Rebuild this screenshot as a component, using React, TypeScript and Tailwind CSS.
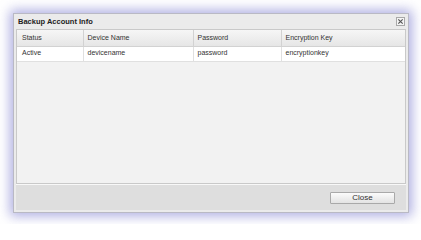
import React from 'react';

const rows = [{ status: 'Active', device: 'devicename', password: 'password', key: 'encryptionkey' }];

export default function App() {
  return (
    <div className="h-[224px] w-[421px] bg-white pl-[13px] pt-[13px] font-['Liberation_Sans',Arial,sans-serif]">
      <div className="flex h-[200px] w-[396px] flex-col border border-[#b9b9c4] bg-[#ebebeb] shadow-[0_0_11px_3px_rgba(120,120,205,0.6)]">
        {/* title bar */}
        <div className="flex h-[15px] items-center justify-between pl-[4px] pr-[3px]">
          <span className="text-[7.5px] font-bold text-[#222]">Backup Account Info</span>
          <span className="flex h-[9px] w-[9px] items-center justify-center border border-[#a8a8a8] bg-[#f4f4f4]">
            <svg viewBox="0 0 8 8" className="h-[7px] w-[7px]">
              <path d="M1.5 1.5L6.5 6.5M6.5 1.5L1.5 6.5" stroke="#555" strokeWidth="1.3" />
            </svg>
          </span>
        </div>

        {/* grid */}
        <div className="mx-[2px] flex-1 border border-[#c9c9c9] bg-[#f2f2f2]">
          <table className="w-full border-collapse text-[7px] text-[#333]">
            <thead>
              <tr className="h-[16px] bg-gradient-to-b from-[#f6f6f6] to-[#e6e6e6] text-left">
                <th className="w-[66px] border-r border-b border-[#d2d2d2] pl-[5px] font-normal">Status</th>
                <th className="w-[110px] border-r border-b border-[#d2d2d2] pl-[4px] font-normal">Device Name</th>
                <th className="w-[88px] border-r border-b border-[#d2d2d2] pl-[4px] font-normal">Password</th>
                <th className="border-b border-[#d2d2d2] pl-[4px] font-normal">Encryption Key</th>
              </tr>
            </thead>
            <tbody>
              {rows.map((r) => (
                <tr key={r.device} className="h-[15px] bg-white">
                  <td className="border-r border-b border-[#e0e0e0] pl-[5px]">{r.status}</td>
                  <td className="border-r border-b border-[#e0e0e0] pl-[4px]">{r.device}</td>
                  <td className="border-r border-b border-[#e0e0e0] pl-[4px]">{r.password}</td>
                  <td className="border-b border-[#e0e0e0] pl-[4px]">{r.key}</td>
                </tr>
              ))}
            </tbody>
          </table>
        </div>

        {/* footer */}
        <div className="mx-[2px] mb-[2px] flex h-[26px] items-center justify-end border-t border-[#f8f8f8] bg-[#dedede] pr-[11px]">
          <button className="h-[12px] w-[65px] rounded-[1px] border border-[#a9a9a9] bg-gradient-to-b from-[#fbfbfb] to-[#e3e3e3] text-[8px] leading-none text-[#333]">
            Close
          </button>
        </div>
      </div>
    </div>
  );
}
